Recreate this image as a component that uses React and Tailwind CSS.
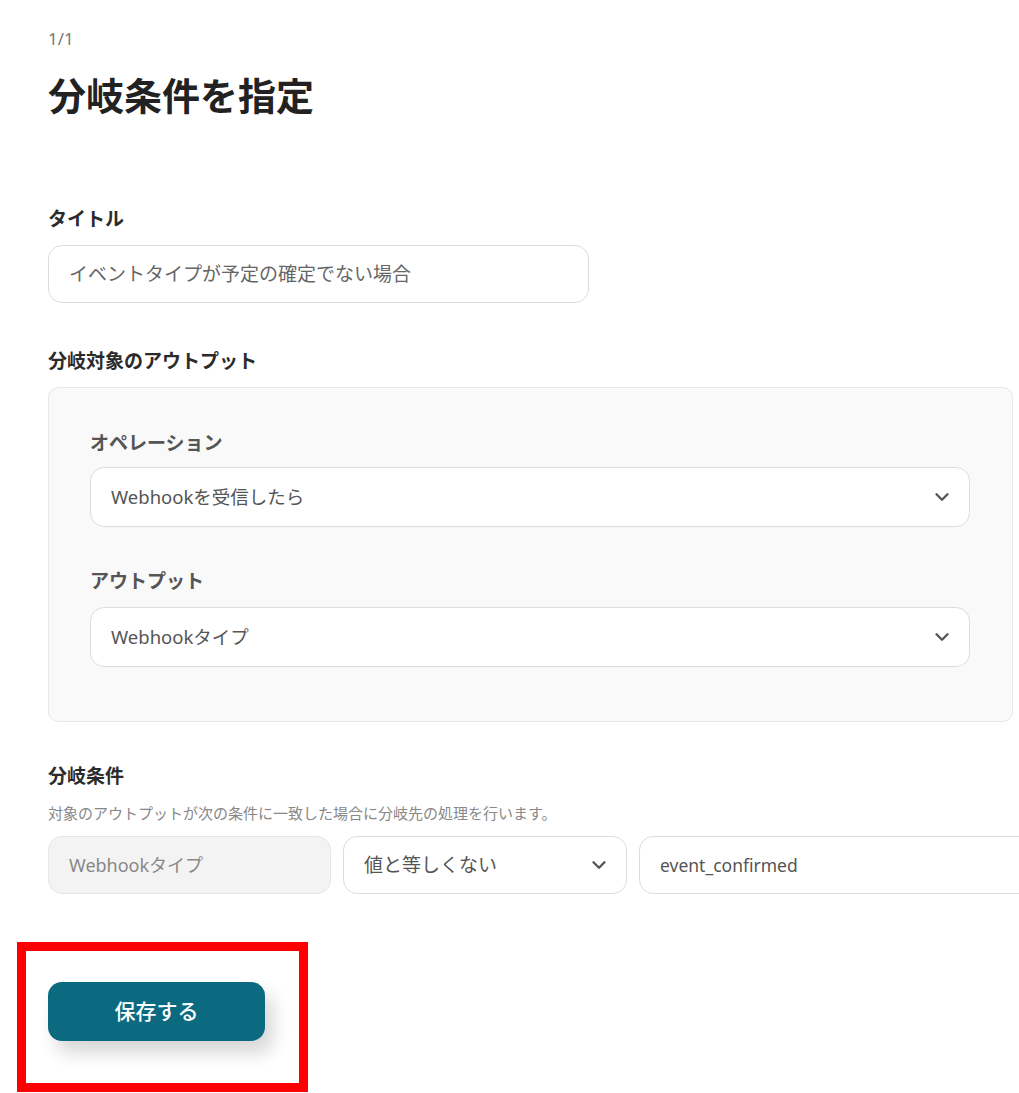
import React from 'react';
import { ChevronDown } from 'lucide-react';

const font = { fontFamily: '"Noto Sans", "Noto Sans CJK JP", sans-serif' };

const SelectBox = ({ value, className = '' }) => (
    <div className={`flex items-center justify-between h-[60px] bg-white border border-[#d9dde3] rounded-[14px] pl-[20px] pr-[16px] ${className}`}>
        <span className="text-[18.5px] text-[#555]">{value}</span>
        <ChevronDown size={22} strokeWidth={2.6} color="#555" />
    </div>
);

const App = () => {
    return (
        <div className="w-[1019px] h-[1093px] overflow-hidden bg-white pl-[48px] pt-[28px]" style={font}>
            <div className="text-[17px] leading-[22px] text-[#777]">1/1</div>
            <h1 className="mt-[23px] text-[38px] leading-[44px] font-bold text-[#222]">分岐条件を指定</h1>

            {/* title */}
            <div className="mt-[90px] text-[19px] leading-[24px] font-bold text-[#2b2b2b]">タイトル</div>
            <div className="mt-[14px] w-[541px] h-[58px] flex items-center px-[20px] border border-[#d9dde3] rounded-[14px] text-[19px] text-[#666]">
                イベントタイプが予定の確定でない場合
            </div>

            {/* target output */}
            <div className="mt-[46px] text-[19px] leading-[24px] font-bold text-[#2b2b2b]">分岐対象のアウトプット</div>
            <div className="mt-[14px] w-[965px] bg-[#f9f9f9] border border-[#e8e8e8] rounded-[10px] pl-[41px] pr-[42px] pt-[43px] pb-[54px]">
                <div className="text-[19px] leading-[24px] font-bold text-[#555]">オペレーション</div>
                <SelectBox value="Webhookを受信したら" className="mt-[12px]" />
                <div className="mt-[42px] text-[19px] leading-[24px] font-bold text-[#555]">アウトプット</div>
                <SelectBox value="Webhookタイプ" className="mt-[14px]" />
            </div>

            {/* condition */}
            <div className="mt-[42px] text-[19px] leading-[24px] font-bold text-[#2b2b2b]">分岐条件</div>
            <div className="mt-[16px] text-[15px] leading-[18px] text-[#888]">対象のアウトプットが次の条件に一致した場合に分岐先の処理を行います。</div>
            <div className="mt-[14px] flex gap-[12px] w-[1000px]">
                <div className="w-[283px] h-[58px] flex items-center px-[20px] bg-[#f3f3f3] border border-[#e6e6e6] rounded-[14px] text-[18px] text-[#888]">
                    Webhookタイプ
                </div>
                <div className="w-[284px] h-[58px] flex items-center justify-between pl-[20px] pr-[16px] bg-white border border-[#d9dde3] rounded-[14px]">
                    <span className="text-[19px] text-[#555]">値と等しくない</span>
                    <ChevronDown size={22} strokeWidth={2.6} color="#555" />
                </div>
                <div className="flex-1 h-[58px] flex items-center px-[20px] bg-white border border-[#d9dde3] rounded-[14px] text-[17.5px] text-[#555]">
                    event_confirmed
                </div>
            </div>

            {/* save button, highlighted */}
            <div className="mt-[48px] ml-[-31px] w-[291px] h-[150px] border-[9px] border-[#ff0000] pl-[22px] pt-[31px]">
                <button className="w-[217px] h-[59px] rounded-[14px] bg-[#0b6a80] text-white text-[21px] font-medium shadow-[8px_12px_18px_rgba(0,0,0,0.16)]">
                    保存する
                </button>
            </div>
        </div>
    );
};

export default App;
